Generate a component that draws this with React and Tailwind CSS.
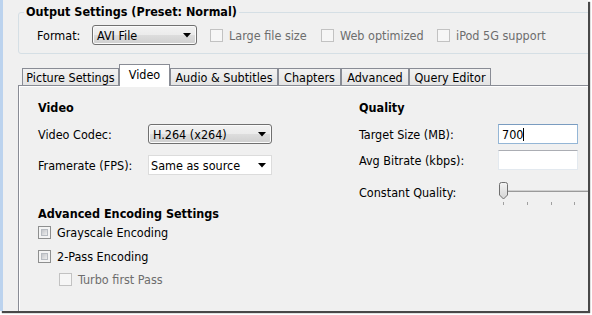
import React from "react";

function Check({ disabled }) {
  return disabled ? (
    <span className="w-[13px] h-[13px] border border-[#c2c2c2] bg-[#f6f6f6] shrink-0 block" />
  ) : (
    <span className="w-[13px] h-[13px] border border-[#8e8f8f] bg-[#f4f4f4] p-[2px] shrink-0 flex">
      <span className="flex-1 bg-[linear-gradient(135deg,#c4c6ca,#eeeeee)] border border-[#b8bcc2]" />
    </span>
  );
}

function Arrow() {
  return (
    <svg width="8" height="5" viewBox="0 0 8 5" className="shrink-0">
      <polygon points="0,0 8,0 4,4.5" fill="#000" />
    </svg>
  );
}

function GrayCombo({ w, text }) {
  return (
    <div
      className={`${w} h-[20px] rounded-[3px] border border-[#707070] bg-[linear-gradient(#f2f2f2_0%,#ebebeb_50%,#dddddd_50%,#cfcfcf_100%)] shadow-[inset_0_0_0_1px_#fbfbfb] flex items-center justify-between pl-[4px] pr-[5px] shrink-0`}
    >
      <span>{text}</span>
      <Arrow />
    </div>
  );
}

function WhiteCombo({ w, text }) {
  return (
    <div className={`${w} h-[20px] border border-[#dcdcdc] bg-white flex items-center justify-between pl-[2px] pr-[5px] shrink-0`}>
      <span>{text}</span>
      <Arrow />
    </div>
  );
}

function Tab({ w, label, selected }) {
  if (selected) {
    return (
      <div className={`${w} h-[22px] border border-b-0 border-[#898c95] bg-white relative z-10 -mb-px flex justify-center pt-[2px] shrink-0`}>
        {label}
      </div>
    );
  }
  return (
    <div className={`${w} h-[17px] border border-b-0 border-[#898c95] bg-[linear-gradient(#f2f2f2,#e3e3e3)] flex items-center justify-center shrink-0 whitespace-nowrap`}>
      {label}
    </div>
  );
}

export default function App() {
  return (
    <div className="w-[592px] h-[315px] bg-white overflow-hidden text-[12.5px] leading-[15px] text-black font-['DejaVu_Sans_Condensed','DejaVu_Sans',sans-serif]">
      <div className="w-[588px] h-[311px] bg-[#f0f0f0] border-l-[3px] border-[#bcd3ee] shadow-[2px_2px_1px_rgba(40,40,40,0.85)] overflow-hidden pl-[15px]">
        {/* Output settings group */}
        <fieldset className="w-[590px] mt-[4px] border border-[#d5dfe5] rounded-[3px] pl-[5px] pt-[5px] pb-[8px]">
          <legend className="px-[2px] font-bold text-[12.5px] leading-[16px]">
            Output Settings (Preset: Normal)
          </legend>
          <div className="flex items-center h-[20px] pl-[13px] whitespace-nowrap">
            <span className="w-[55px]">Format:</span>
            <GrayCombo w="w-[105px]" text="AVI File" />
            <div className="ml-[13px] flex items-center gap-[6px] w-[111px]">
              <Check disabled />
              <span className="text-[#6d6d6d]">Large file size</span>
            </div>
            <div className="flex items-center gap-[6px] w-[116px]">
              <Check disabled />
              <span className="text-[#6d6d6d]">Web optimized</span>
            </div>
            <div className="flex items-center gap-[6px]">
              <Check disabled />
              <span className="text-[#6d6d6d]">iPod 5G support</span>
            </div>
          </div>
        </fieldset>

        {/* Tabs */}
        <div className="mt-[10px] w-[600px]">
          <div className="flex items-end pl-[4px]">
            <Tab w="w-[97px]" label="Picture Settings" />
            <Tab w="w-[51px]" label="Video" selected />
            <Tab w="w-[108px]" label="Audio & Subtitles" />
            <Tab w="w-[63px]" label="Chapters" />
            <Tab w="w-[68px]" label="Advanced" />
            <Tab w="w-[82px]" label="Query Editor" />
          </div>
          <div className="h-[240px] border border-[#898c95] shadow-[inset_1px_1px_0_#ffffff] bg-[#f0f0f0] pl-[19px] pt-[13px] flex whitespace-nowrap">
            {/* Left column */}
            <div className="w-[321px] flex flex-col">
              <div className="h-[16px] flex items-center font-bold">Video</div>
              <div className="mt-[9px] h-[20px] flex items-center">
                <span className="w-[110px]">Video Codec:</span>
                <GrayCombo w="w-[124px]" text="H.264 (x264)" />
              </div>
              <div className="mt-[11px] h-[20px] flex items-center">
                <span className="w-[110px]">Framerate (FPS):</span>
                <WhiteCombo w="w-[124px]" text="Same as source" />
              </div>
              <div className="mt-[30px] h-[16px] flex items-center font-bold">Advanced Encoding Settings</div>
              <div className="mt-[5px] h-[13px] flex items-center gap-[6px]">
                <Check />
                <span>Grayscale Encoding</span>
              </div>
              <div className="mt-[11px] h-[13px] flex items-center gap-[6px]">
                <Check />
                <span>2-Pass Encoding</span>
              </div>
              <div className="mt-[10px] ml-[21px] h-[13px] flex items-center gap-[6px]">
                <Check disabled />
                <span className="text-[#6d6d6d]">Turbo first Pass</span>
              </div>
            </div>
            {/* Right column */}
            <div className="flex-1 flex flex-col">
              <div className="h-[16px] flex items-center font-bold">Quality</div>
              <div className="mt-[9px] h-[20px] flex items-center">
                <span className="w-[139px]">Target Size (MB):</span>
                <div className="w-[80px] h-[20px] border border-[#94b6d6] border-t-[#7a9cc0] bg-white flex items-center pl-[3px]">
                  <span>700</span>
                  <span className="w-px h-[13px] bg-black" />
                </div>
              </div>
              <div className="mt-[6px] h-[20px] flex items-center">
                <span className="w-[139px]">Avg Bitrate (kbps):</span>
                <div className="w-[80px] h-[20px] border border-[#e3e9ef] border-t-[#abadb3] bg-white" />
              </div>
              <div className="mt-[12px] h-[26px] flex items-start">
                <span className="w-[139px] h-[20px] flex items-center">Constant Quality:</span>
                <svg width="100" height="26" viewBox="0 0 100 26" className="shrink-0">
                  <line x1="10" y1="8.5" x2="100" y2="8.5" stroke="#d0d0d0" strokeWidth="1" />
                  <line x1="10" y1="9.5" x2="100" y2="9.5" stroke="#9a9a9a" strokeWidth="1" />
                  <defs>
                    <linearGradient id="th" x1="0" y1="0" x2="0" y2="1">
                      <stop offset="0" stopColor="#f4f4f4" />
                      <stop offset="1" stopColor="#d4d4d4" />
                    </linearGradient>
                  </defs>
                  <path d="M1.5 2.5 Q1.5 0.5 3.5 0.5 L7.5 0.5 Q9.5 0.5 9.5 2.5 L9.5 13 L5.5 17 L1.5 13 Z" fill="url(#th)" stroke="#707070" strokeWidth="1" />
                  <line x1="5.5" y1="20" x2="5.5" y2="23" stroke="#a0a0a0" />
                  <line x1="29.5" y1="20" x2="29.5" y2="23" stroke="#a0a0a0" />
                  <line x1="53.5" y1="20" x2="53.5" y2="23" stroke="#a0a0a0" />
                  <line x1="76.5" y1="20" x2="76.5" y2="23" stroke="#a0a0a0" />
                </svg>
              </div>
            </div>
          </div>
        </div>
      </div>
    </div>
  );
}
